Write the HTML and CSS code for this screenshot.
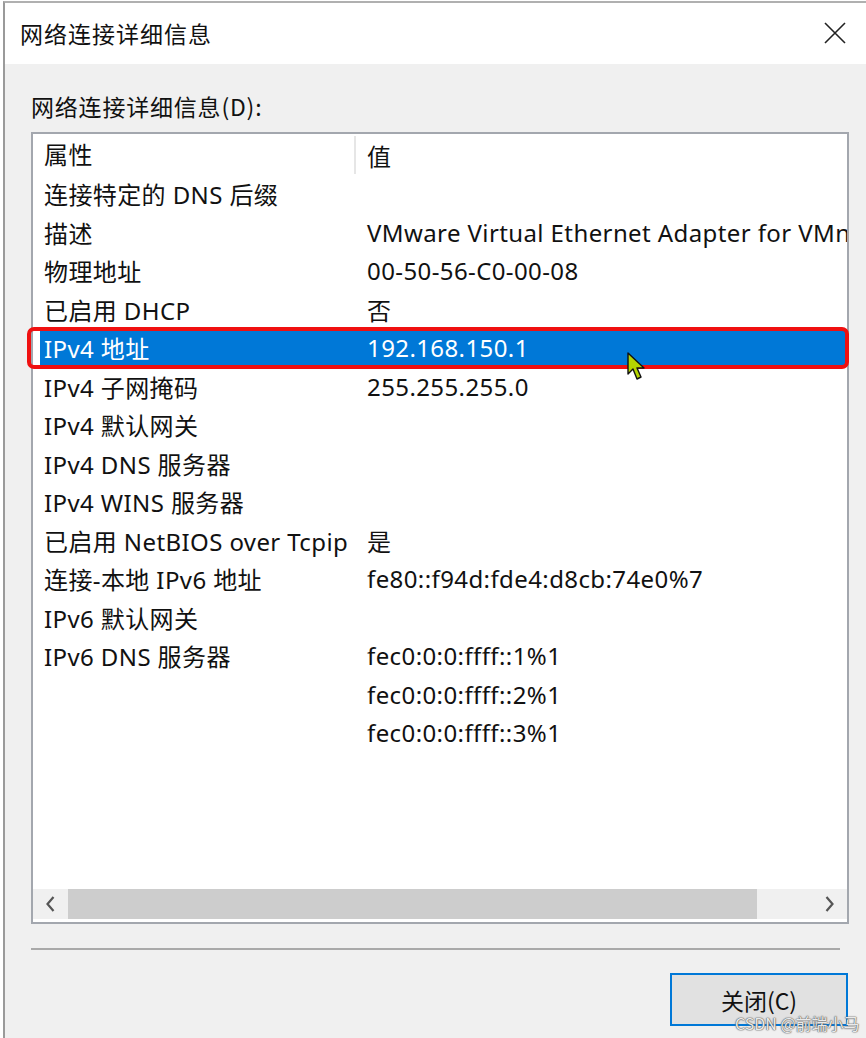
FILE: index.html
```html
<!DOCTYPE html>
<html lang="zh-CN">
<head>
<meta charset="utf-8">
<title>网络连接详细信息</title>
<link rel="stylesheet" href="styles.css">
</head>
<body>
<div class="window">
  <div class="titlebar">
    <span class="title">网络连接详细信息</span>
    <svg class="close" width="22" height="22" viewBox="0 0 22 22"><path d="M1 1 L21 21 M21 1 L1 21" stroke="#222" stroke-width="1.6" fill="none"/></svg>
  </div>
  <div class="content">
    <div class="label">网络连接详细信息(D):</div>
    <div class="listbox">
      <div class="rows">
        <div class="row header"><span class="c1">属性</span><span class="c2">值</span></div>
        <div class="row"><span class="c1">连接特定的 DNS 后缀</span><span class="c2"></span></div>
        <div class="row"><span class="c1">描述</span><span class="c2">VMware Virtual Ethernet Adapter for VMnet8</span></div>
        <div class="row"><span class="c1">物理地址</span><span class="c2">00-50-56-C0-00-08</span></div>
        <div class="row"><span class="c1">已启用 DHCP</span><span class="c2">否</span></div>
        <div class="row selected"><span class="c1">IPv4 地址</span><span class="c2">192.168.150.1</span></div>
        <div class="row"><span class="c1">IPv4 子网掩码</span><span class="c2">255.255.255.0</span></div>
        <div class="row"><span class="c1">IPv4 默认网关</span><span class="c2"></span></div>
        <div class="row"><span class="c1">IPv4 DNS 服务器</span><span class="c2"></span></div>
        <div class="row"><span class="c1">IPv4 WINS 服务器</span><span class="c2"></span></div>
        <div class="row"><span class="c1">已启用 NetBIOS over Tcpip</span><span class="c2">是</span></div>
        <div class="row"><span class="c1">连接-本地 IPv6 地址</span><span class="c2">fe80::f94d:fde4:d8cb:74e0%7</span></div>
        <div class="row"><span class="c1">IPv6 默认网关</span><span class="c2"></span></div>
        <div class="row"><span class="c1">IPv6 DNS 服务器</span><span class="c2">fec0:0:0:ffff::1%1</span></div>
        <div class="row"><span class="c1"></span><span class="c2">fec0:0:0:ffff::2%1</span></div>
        <div class="row"><span class="c1"></span><span class="c2">fec0:0:0:ffff::3%1</span></div>
      </div>
      <div class="hscroll">
        <svg class="arrow" width="10" height="16" viewBox="0 0 10 16"><path d="M8 1 L2 8 L8 15" stroke="#555" stroke-width="2.2" fill="none"/></svg>
        <div class="track"><div class="thumb"></div></div>
        <svg class="arrow" width="10" height="16" viewBox="0 0 10 16"><path d="M2 1 L8 8 L2 15" stroke="#555" stroke-width="2.2" fill="none"/></svg>
      </div>
    </div>
    <div class="separator"></div>
    <div class="footer">
      <button class="btn">关闭(C)</button>
    </div>
  </div>
  <div class="highlight"></div>
  <svg class="cursor" width="22" height="30" viewBox="0 0 22 30"><path d="M1 1 L1 22 L6 17 L10 27 L14 25 L10 16 L17 16 Z" fill="#b4d400" stroke="#111" stroke-width="1.4" stroke-linejoin="round"/></svg>
  <div class="watermark">CSDN @前端小马</div>
</div>
</body>
</html>
```
FILE: styles.css
```css
html, body {
  margin: 0;
  padding: 0;
  background: #ffffff;
  overflow: hidden;
}
body {
  width: 866px;
  height: 1038px;
  font-family: "Noto Sans", "Noto Sans CJK SC", sans-serif;
  color: #111;
}
.window {
  position: relative;
  margin: 1px 0 0 3px;
  height: 1037px;
  border-left: 2px solid #9a9a9a;
  border-top: 2px solid #b0b0b0;
  background: #f0f0f0;
  box-sizing: border-box;
  display: flex;
  flex-direction: column;
}
.titlebar {
  height: 59px;
  background: #ffffff;
  display: flex;
  align-items: center;
  justify-content: space-between;
  padding: 0 20px 2px 15px;
  flex-shrink: 0;
}
.title {
  font-size: 23px;
  font-family: "Noto Sans CJK SC", sans-serif;
  letter-spacing: 1px;
}
.close {
  display: block;
}
.content {
  padding: 27px 17px 0 26px;
  display: flex;
  flex-direction: column;
}
.label {
  font-size: 23px;
  font-family: "Noto Sans CJK SC", sans-serif;
  letter-spacing: 0.8px;
  line-height: 30px;
  margin-bottom: 11px;
}
.listbox {
  height: 792px;
  border: 2px solid #a3a7ae;
  background: #ffffff;
  box-sizing: border-box;
  display: flex;
  flex-direction: column;
  overflow: hidden;
}
.rows {
  flex: 1;
  padding: 2px 0 0 7px;
  overflow: hidden;
}
.row {
  height: 38.5px;
  display: flex;
  align-items: center;
  font-size: 24px;
  letter-spacing: 0.4px;
  white-space: nowrap;
}
.c1 {
  width: 323px;
  padding-left: 4px;
  flex-shrink: 0;
  box-sizing: border-box;
}
.c2 {
  padding-left: 4px;
}
.header .c1 {
  border-right: 2px solid #e6e6e6;
  height: 38px;
  line-height: 38px;
  width: 316px;
  margin-right: 7px;
}
.selected {
  background: #0078d7;
  color: #ffffff;
}
.hscroll {
  height: 30px;
  background: #f0f0f0;
  display: flex;
  align-items: center;
  margin-bottom: 3px;
  flex-shrink: 0;
}
.arrow {
  width: 35px;
  flex-shrink: 0;
}
.track {
  flex: 1;
  height: 30px;
}
.thumb {
  width: 689px;
  height: 100%;
  background: #cdcdcd;
}
.separator {
  margin-top: 24px;
  height: 2px;
  width: 809px;
  background: #a9a9a9;
}
.footer {
  display: flex;
  justify-content: flex-end;
  padding-top: 23px;
  padding-right: 0;
}
.btn {
  width: 178px;
  height: 53px;
  border: 2px solid #0078d7;
  background: #e1e1e1;
  font-family: "Noto Sans CJK SC", sans-serif;
  font-size: 23px;
  color: #111;
  padding: 0;
  margin-right: 1px;
}
.highlight {
  position: absolute;
  left: 22px;
  top: 324px;
  width: 822px;
  height: 42px;
  border: 4px solid #f01010;
  border-radius: 7px;
  box-sizing: border-box;
}
.cursor {
  position: absolute;
  left: 622px;
  top: 349px;
}
.watermark {
  position: absolute;
  left: 730px;
  top: 1008px;
  font-family: "Noto Sans CJK SC", sans-serif;
  font-size: 16px;
  color: rgba(255, 255, 255, 0.9);
  text-shadow: 0 0 1px #555, 0 0 1px #555, 0 0 2px #888;
  white-space: nowrap;
}
```
